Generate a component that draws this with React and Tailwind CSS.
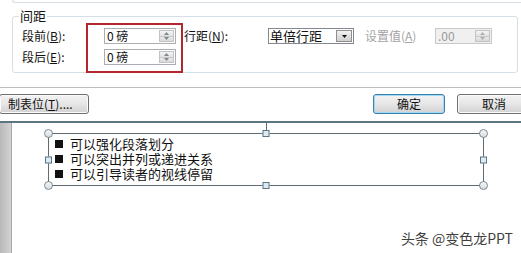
import React from "react";

const FONT = { fontFamily: '"Noto Sans CJK SC", "Liberation Sans", sans-serif' };

function Tri({ up, color = "#6f6f6f" }) {
  return (
    <svg width="5" height="3" viewBox="0 0 5 3">
      <polygon points={up ? "0,3 5,3 2.5,0" : "0,0 5,0 2.5,3"} fill={color} />
    </svg>
  );
}

function Spin({ value, disabled = false, wide = true }) {
  return (
    <div
      className={`flex h-[16px] shrink-0 border ${wide ? "w-[72px]" : "w-[57px]"} ${
        disabled ? "border-[#c9c9c9] bg-[#f0f0f0]" : "border-[#abadb3] bg-white"
      }`}
    >
      <div
        className={`flex-1 pl-[2px] text-[12px] leading-[14px] ${
          disabled ? "text-[#9a9a9a]" : "text-[#111]"
        }`}
      >
        {value}
      </div>
      <div className="my-[1px] mr-[1px] flex w-[15px] flex-col border border-[#c3c3c3]">
        <div className="flex flex-1 items-center justify-center border-b border-[#c8c8c8] bg-gradient-to-b from-[#f4f4f4] to-[#e2e2e2]">
          <Tri up color={disabled ? "#b0b0b0" : "#7d8890"} />
        </div>
        <div className="flex flex-1 items-center justify-center bg-gradient-to-b from-[#e9e9e9] to-[#d9d9d9]">
          <Tri color={disabled ? "#b0b0b0" : "#7d8890"} />
        </div>
      </div>
    </div>
  );
}

function Handle({ className, round }) {
  return (
    <div
      className={`absolute ${className} ${
        round
          ? "h-[9px] w-[9px] rounded-full border border-[#7d8a90] bg-gradient-to-b from-[#f3f6f8] to-[#d6dee3]"
          : "h-[7px] w-[7px] border border-[#5f7682] bg-[#dcebf3]"
      }`}
    />
  );
}

function Btn({ children, primary, className }) {
  return (
    <div
      className={`flex h-[20px] shrink-0 items-center rounded-[3px] border bg-gradient-to-b from-[#f3f3f3] via-[#e6e6e6] to-[#d2d2d2] text-[12px] text-[#111] ${
        primary
          ? "border-[#3c7fb1] shadow-[inset_0_0_0_1px_#9fd9f3]"
          : "border-[#707070] shadow-[inset_0_0_0_1px_#fbfbfb]"
      } ${className}`}
    >
      {children}
    </div>
  );
}

const lines = ["可以强化段落划分", "可以突出并列或递进关系", "可以引导读者的视线停留"];

export default function App() {
  return (
    <div className="h-[253px] w-[521px] overflow-hidden bg-white" style={FONT}>
      {/* dialog */}
      <div className="flex h-[123px] flex-col border-b-2 border-[#5b7480] bg-white">
        <div className="ml-[12px] h-[3px] rounded-bl-[3px] border-b border-l border-[#d5dfe5]" />

        <div className="relative ml-[12px] mr-[3px] mt-[13px] h-[57px] rounded-[3px] border border-[#d5dfe5]">
          <div className="absolute left-[6px] top-[-9px] bg-white px-[1px] text-[13px] leading-[16px] text-[#111]">
            间距
          </div>

          <div className="flex flex-col gap-[5px] pl-[9px] pt-[11px] text-[12px] leading-[16px] text-[#111]">
            <div className="flex h-[16px] items-center">
              <div className="w-[82px] shrink-0">
                段前(<u>B</u>):
              </div>
              <Spin value="0 磅" />
              <div className="ml-[8px] w-[84px] shrink-0">
                行距(<u>N</u>):
              </div>
              <div className="flex h-[16px] w-[86px] shrink-0 border border-[#828790] bg-white">
                <div className="flex-1 pl-[1px] text-[13px] leading-[14px]">单倍行距</div>
                <div className="my-[1px] mr-[1px] flex w-[16px] items-center justify-center border border-[#8f8f8f] bg-gradient-to-b from-[#f2f2f2] to-[#cfcfcf]">
                  <Tri color="#111" />
                </div>
              </div>
              <div className="ml-[11px] w-[70px] shrink-0 text-[#a3a3a3]">
                设置值(<u>A</u>)
              </div>
              <Spin value=".00" disabled wide={false} />
            </div>

            <div className="flex h-[16px] items-center">
              <div className="w-[82px] shrink-0">
                段后(<u>E</u>):
              </div>
              <Spin value="0 磅" />
            </div>
          </div>

          {/* annotation */}
          <div className="absolute left-[73px] top-[6px] h-[50px] w-[97px] border-2 border-[#b3262e]" />
        </div>

        <div className="mt-[14px] h-px bg-[#bcbcbc]" />

        <div className="flex pt-[6px]">
          <Btn className="ml-[-1px] w-[90px] pl-[8px]">
            制表位(<u>T</u>)....
          </Btn>
          <Btn primary className="ml-[284px] w-[72px] justify-center">
            确定
          </Btn>
          <Btn className="ml-[12px] w-[74px] justify-center">取消</Btn>
        </div>
      </div>

      {/* document */}
      <div className="flex h-[130px]">
        <div className="w-[12px] shrink-0 border-r border-[#a9a9a9] bg-gradient-to-r from-[#b9b9b9] to-[#d3d3d3]" />
        <div className="relative flex-1 bg-white">
          <div className="relative ml-[36px] mt-[10px] h-[53px] w-[436px] border border-[#5f6b70]">
            <div className="flex flex-col pl-[6px] pt-[2px] text-[13px] leading-[15px] text-[#111]">
              {lines.map((t) => (
                <div key={t} className="flex items-center">
                  <div className="mr-[7px] h-[8px] w-[8px] shrink-0 bg-[#111]" />
                  <span>{t}</span>
                </div>
              ))}
            </div>

            <div className="absolute left-1/2 top-[-11px] h-[8px] w-px bg-[#5f6b70]" />
            <Handle round className="-left-[5px] -top-[5px]" />
            <Handle round className="-right-[5px] -top-[5px]" />
            <Handle round className="-bottom-[5px] -left-[5px]" />
            <Handle round className="-bottom-[5px] -right-[5px]" />
            <Handle className="left-1/2 -top-[4px] -translate-x-1/2" />
            <Handle className="-bottom-[4px] left-1/2 -translate-x-1/2" />
            <Handle className="-left-[4px] top-1/2 -translate-y-1/2" />
            <Handle className="-right-[4px] top-1/2 -translate-y-1/2" />
          </div>

          <div className="absolute bottom-[7px] right-[8px] text-[14px] leading-[16px] text-[#3f3f3f] [text-shadow:0_0_2px_#fff]">
            头条 @变色龙PPT
          </div>
        </div>
      </div>
    </div>
  );
}
